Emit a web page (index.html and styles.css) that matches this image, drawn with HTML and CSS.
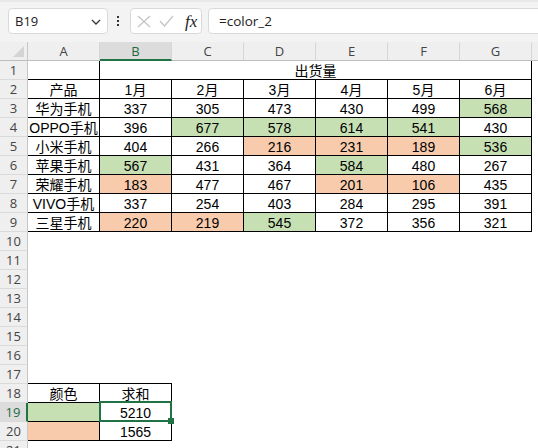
FILE: index.html
```html
<!DOCTYPE html>
<html>
<head>
<meta charset="utf-8">
<link rel="stylesheet" href="styles.css">
</head>
<body>
<div class="toolbar">
  <div class="namebox"><span>B19</span>
    <svg class="chev" width="10" height="6" viewBox="0 0 10 6"><path d="M1 1 L5 5 L9 1" fill="none" stroke="#333" stroke-width="1.3"/></svg>
  </div>
  <div class="dots"><i></i><i></i><i></i></div>
  <div class="fxbox">
    <svg width="14" height="13" viewBox="0 0 14 13"><path d="M1 1 L13 12 M13 1 L1 12" stroke="#c4c4c4" stroke-width="1.2" fill="none"/></svg>
    <svg width="15" height="12" viewBox="0 0 15 12"><path d="M1 6 L5.5 11 L14 1" stroke="#c4c4c4" stroke-width="1.2" fill="none"/></svg>
    <span class="fx">fx</span>
  </div>
  <div class="formula">=color_2</div>
</div>

<div class="sheet">
  <div class="corner"><div class="tri"></div></div>
  <div class="ch">A</div><div class="ch sel">B</div><div class="ch">C</div><div class="ch">D</div><div class="ch">E</div><div class="ch">F</div><div class="ch">G</div><div class="ch last"></div>

  <div class="rh">1</div><div class="c b"></div><div class="c b span6">出货量</div><div class="fill"></div>
  <div class="rh">2</div><div class="c b">产品</div><div class="c b">1月</div><div class="c b">2月</div><div class="c b">3月</div><div class="c b">4月</div><div class="c b">5月</div><div class="c b">6月</div><div class="fill"></div>
  <div class="rh">3</div><div class="c b">华为手机</div><div class="c b">337</div><div class="c b">305</div><div class="c b">473</div><div class="c b">430</div><div class="c b">499</div><div class="c b g">568</div><div class="fill"></div>
  <div class="rh">4</div><div class="c b">OPPO手机</div><div class="c b">396</div><div class="c b g">677</div><div class="c b g">578</div><div class="c b g">614</div><div class="c b g">541</div><div class="c b">430</div><div class="fill"></div>
  <div class="rh">5</div><div class="c b">小米手机</div><div class="c b">404</div><div class="c b">266</div><div class="c b o">216</div><div class="c b o">231</div><div class="c b o">189</div><div class="c b g">536</div><div class="fill"></div>
  <div class="rh">6</div><div class="c b">苹果手机</div><div class="c b g">567</div><div class="c b">431</div><div class="c b">364</div><div class="c b g">584</div><div class="c b">480</div><div class="c b">267</div><div class="fill"></div>
  <div class="rh">7</div><div class="c b">荣耀手机</div><div class="c b o">183</div><div class="c b">477</div><div class="c b">467</div><div class="c b o">201</div><div class="c b o">106</div><div class="c b">435</div><div class="fill"></div>
  <div class="rh">8</div><div class="c b">VIVO手机</div><div class="c b">337</div><div class="c b">254</div><div class="c b">403</div><div class="c b">284</div><div class="c b">295</div><div class="c b">391</div><div class="fill"></div>
  <div class="rh">9</div><div class="c b">三星手机</div><div class="c b o">220</div><div class="c b o">219</div><div class="c b g">545</div><div class="c b">372</div><div class="c b">356</div><div class="c b">321</div><div class="fill"></div>

  <div class="rh">10</div><div class="empty"></div>
  <div class="rh">11</div><div class="empty"></div>
  <div class="rh">12</div><div class="empty"></div>
  <div class="rh">13</div><div class="empty"></div>
  <div class="rh">14</div><div class="empty"></div>
  <div class="rh">15</div><div class="empty"></div>
  <div class="rh">16</div><div class="empty"></div>
  <div class="rh">17</div><div class="c bb"></div><div class="c bb"></div><div class="rest"></div>
  <div class="rh">18</div><div class="c b">颜色</div><div class="c b">求和</div><div class="rest"></div>
  <div class="rh sel">19</div><div class="c b g"></div><div class="c b active">5210</div><div class="rest"></div>
  <div class="rh">20</div><div class="c b o"></div><div class="c b">1565</div><div class="rest"></div>
  <div class="rh">21</div><div class="empty"></div>
</div>
</body>
</html>
```

FILE: styles.css
```css
html, body {
  margin: 0;
  padding: 0;
  background: #ffffff;
  overflow: hidden;
}
body {
  width: 538px;
  height: 448px;
  font-family: "Open Sans", "Noto Sans", sans-serif;
}
.toolbar {
  height: 42px;
  box-sizing: border-box;
  background: #f3f3f3;
  border-top: 2px solid #e8e8e8;
  padding: 6px 0 0 8px;
  display: flex;
  align-items: flex-start;
  overflow: hidden;
}
.namebox {
  width: 100px;
  height: 26px;
  box-sizing: border-box;
  background: #fff;
  border: 1px solid #d9d9d9;
  border-radius: 4px;
  display: flex;
  align-items: center;
  justify-content: space-between;
  padding: 0 6px 0 6px;
  font-size: 13px;
  color: #222;
}
.chev { margin-top: 1px; }
.dots {
  width: 20px;
  height: 26px;
  display: flex;
  flex-direction: column;
  align-items: center;
  justify-content: center;
  gap: 2px;
}
.dots i {
  display: block;
  width: 2px;
  height: 2px;
  background: #333;
}
.fxbox {
  margin-left: 2px;
  width: 72px;
  height: 26px;
  box-sizing: border-box;
  background: #fff;
  border: 1px solid #d9d9d9;
  border-radius: 4px;
  display: flex;
  align-items: center;
  padding-left: 6px;
  gap: 8px;
}
.fx {
  font-family: "Liberation Serif", "DejaVu Serif", serif;
  font-style: italic;
  font-size: 17px;
  color: #222;
  margin-left: 3px;
  line-height: 1;
}
.formula {
  margin-left: 6px;
  flex: 1;
  margin-right: -12px;
  height: 26px;
  box-sizing: border-box;
  background: #fff;
  border: 1px solid #d9d9d9;
  border-radius: 4px;
  padding-left: 10px;
  font-size: 13.5px;
  line-height: 24px;
  color: #222;
}

.sheet {
  display: grid;
  grid-template-columns: 28px repeat(7, 72px) 1fr;
  grid-auto-rows: 19px;
}
.corner {
  background: #efefef;
  border-right: 1px solid #c8c8c8;
  border-bottom: 1px solid #bdbdbd;
  box-sizing: border-box;
  display: flex;
  justify-content: flex-end;
  align-items: flex-end;
  padding: 0 3px 3px 0;
}
.tri {
  width: 11px;
  height: 11px;
  background: #d4d4d4;
  clip-path: polygon(100% 0, 100% 100%, 0 100%);
}
.ch {
  background: #efefef;
  border-right: 1px solid #d6d6d6;
  border-bottom: 1px solid #bdbdbd;
  box-sizing: border-box;
  text-align: center;
  font-size: 13px;
  line-height: 19px;
  color: #444;
}
.ch.sel {
  background: #dcdcdc;
  border-bottom: 2px solid #217346;
  color: #1e6b41;
}
.ch.last { border-right: none; }
.rh {
  background: #efefef;
  border-right: 1px solid #c8c8c8;
  border-bottom: 1px solid #dadada;
  box-sizing: border-box;
  text-align: center;
  font-size: 13px;
  line-height: 18px;
  color: #444;
}
.rh.sel {
  background: #dcdcdc;
  border-right: 2px solid #217346;
  color: #1e6b41;
}
.c {
  box-sizing: border-box;
  text-align: center;
  font-family: "Liberation Sans", "Noto Sans CJK SC", sans-serif;
  font-size: 14px;
  line-height: 18px;
  padding-top: 1px;
  color: #000;
  white-space: nowrap;
  overflow: visible;
}
.c.b {
  border-right: 1px solid #000;
  border-bottom: 1px solid #000;
}
.c.bb { border-bottom: 1px solid #000; }
.span6 { grid-column: span 6; }
.g { background: #c6e0b4; }
.o { background: #f8cbad; }
.empty { grid-column: span 8; }
.rest { grid-column: span 6; }
.active { position: relative; }
.active::after {
  content: "";
  position: absolute;
  top: -2px;
  left: -1px;
  right: -1px;
  bottom: -1px;
  border: 2px solid #217346;
}
.active::before {
  content: "";
  position: absolute;
  right: -3px;
  bottom: -3px;
  width: 6px;
  height: 6px;
  background: #217346;
  z-index: 2;
}
```
